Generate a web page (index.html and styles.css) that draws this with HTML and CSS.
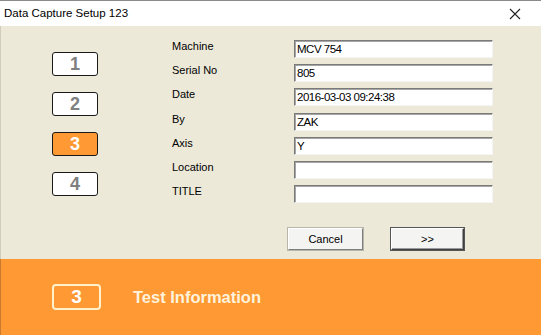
FILE: index.html
```html
<!DOCTYPE html>
<html lang="en">
<head>
    <meta charset="UTF-8">
    <meta name="viewport" content="width=device-width, initial-scale=1.0">
    <title>Data Capture Setup 123</title>
    <link rel="stylesheet" href="styles.css">
</head>
<body>
    <div class="window">
        <div class="titlebar">
            <span class="title">Data Capture Setup 123</span>
            <svg class="close" width="12" height="12" viewBox="0 0 12 12">
                <path d="M1 1 L11 11 M11 1 L1 11" stroke="#222" stroke-width="1.1" fill="none"/>
            </svg>
        </div>

        <div class="content">
            <div class="steps">
                <div class="step">1</div>
                <div class="step">2</div>
                <div class="step active">3</div>
                <div class="step">4</div>
            </div>

            <div class="form">
                <div class="fields">
                    <label for="machine">Machine</label>
                    <input type="text" id="machine" value="MCV 754">

                    <label for="serial">Serial No</label>
                    <input type="text" id="serial" value="805">

                    <label for="date">Date</label>
                    <input type="text" id="date" value="2016-03-03 09:24:38">

                    <label for="by">By</label>
                    <input type="text" id="by" value="ZAK">

                    <label for="axis">Axis</label>
                    <input type="text" id="axis" value="Y">

                    <label for="location">Location</label>
                    <input type="text" id="location">

                    <label for="title">TITLE</label>
                    <input type="text" id="title">
                </div>

                <div class="actions">
                    <button type="button" class="btn">Cancel</button>
                    <button type="button" class="btn default">&gt;&gt;</button>
                </div>
            </div>
        </div>

        <div class="banner">
            <div class="banner-step">3</div>
            <span class="banner-text">Test Information</span>
        </div>
    </div>
</body>
</html>
```

FILE: styles.css
```css
body {
    margin: 0;
    padding: 0;
    font-family: "Liberation Sans", Arial, sans-serif;
    background: #ece9d8;
}

.window {
    width: 541px;
    height: 335px;
    display: flex;
    flex-direction: column;
    overflow: hidden;
}

.titlebar {
    height: 25px;
    background: #fff;
    border-top: 1px solid #8a8a8a;
    display: flex;
    align-items: center;
    justify-content: space-between;
    padding: 0 20px 0 4px;
}

.title {
    font-size: 11.5px;
    color: #000;
    margin-top: -1px;
}

.close {
    margin-top: 1px;
}

.content {
    height: 233px;
    background: #ece9d8;
    border-left: 1px solid #d0cdbf;
    display: flex;
    padding-left: 51px;
}

.steps {
    width: 46px;
    margin-right: 74px;
    padding-top: 26px;
    display: flex;
    flex-direction: column;
    gap: 16px;
}

.step {
    height: 22px;
    border: 1px solid #1a1a1a;
    border-radius: 3px;
    background: #fff;
    color: #808080;
    font-weight: bold;
    font-size: 18px;
    line-height: 22px;
    text-align: center;
}

.step.active {
    background: #ff9933;
    color: #fff;
}

.form {
    padding-top: 14px;
}

.fields {
    display: grid;
    grid-template-columns: 122px 199px;
    grid-auto-rows: 18px;
    row-gap: 6.2px;
}

.fields label {
    font-size: 11px;
    line-height: 13px;
    color: #000;
}

.fields input {
    box-sizing: border-box;
    width: 199px;
    height: 18px;
    margin: 0;
    padding: 0 0 0 2px;
    font-family: "Liberation Sans", Arial, sans-serif;
    font-size: 11.5px;
    letter-spacing: -0.5px;
    color: #000;
    background: #fff;
    border: 1px solid;
    border-color: #7a7a7a #f4f4f4 #f4f4f4 #7a7a7a;
    box-shadow: inset 1px 1px 0 #a6a6a6;
    outline: none;
}

.actions {
    display: flex;
    gap: 28px;
    padding-left: 116px;
    margin-top: 25px;
}

.btn {
    width: 75px;
    height: 22px;
    padding: 0;
    font-family: "Liberation Sans", Arial, sans-serif;
    font-size: 11px;
    color: #000;
    background: #f4f4f2;
    border: 1px solid;
    border-color: #fff #7d7d7d #7d7d7d #fff;
    box-shadow: 0 0 0 1px #b8b6ab;
}

.btn.default {
    width: 73px;
    border-color: #fff #404040 #404040 #fff;
    box-shadow: 0 0 0 1px #555, inset -1px -1px 0 #9a9a9a;
}

.banner {
    flex: 1;
    background: #ff9933;
    border-left: 1px solid #c87a2e;
    display: flex;
    align-items: center;
    padding-left: 51px;
}

.banner-step {
    box-sizing: border-box;
    width: 49px;
    height: 26px;
    border: 2px solid #fff1cc;
    border-radius: 4px;
    color: #fff;
    font-weight: bold;
    font-size: 19px;
    line-height: 22px;
    text-align: center;
}

.banner-text {
    margin-left: 32px;
    color: #fff3dc;
    font-weight: bold;
    font-size: 16.5px;
}
```
